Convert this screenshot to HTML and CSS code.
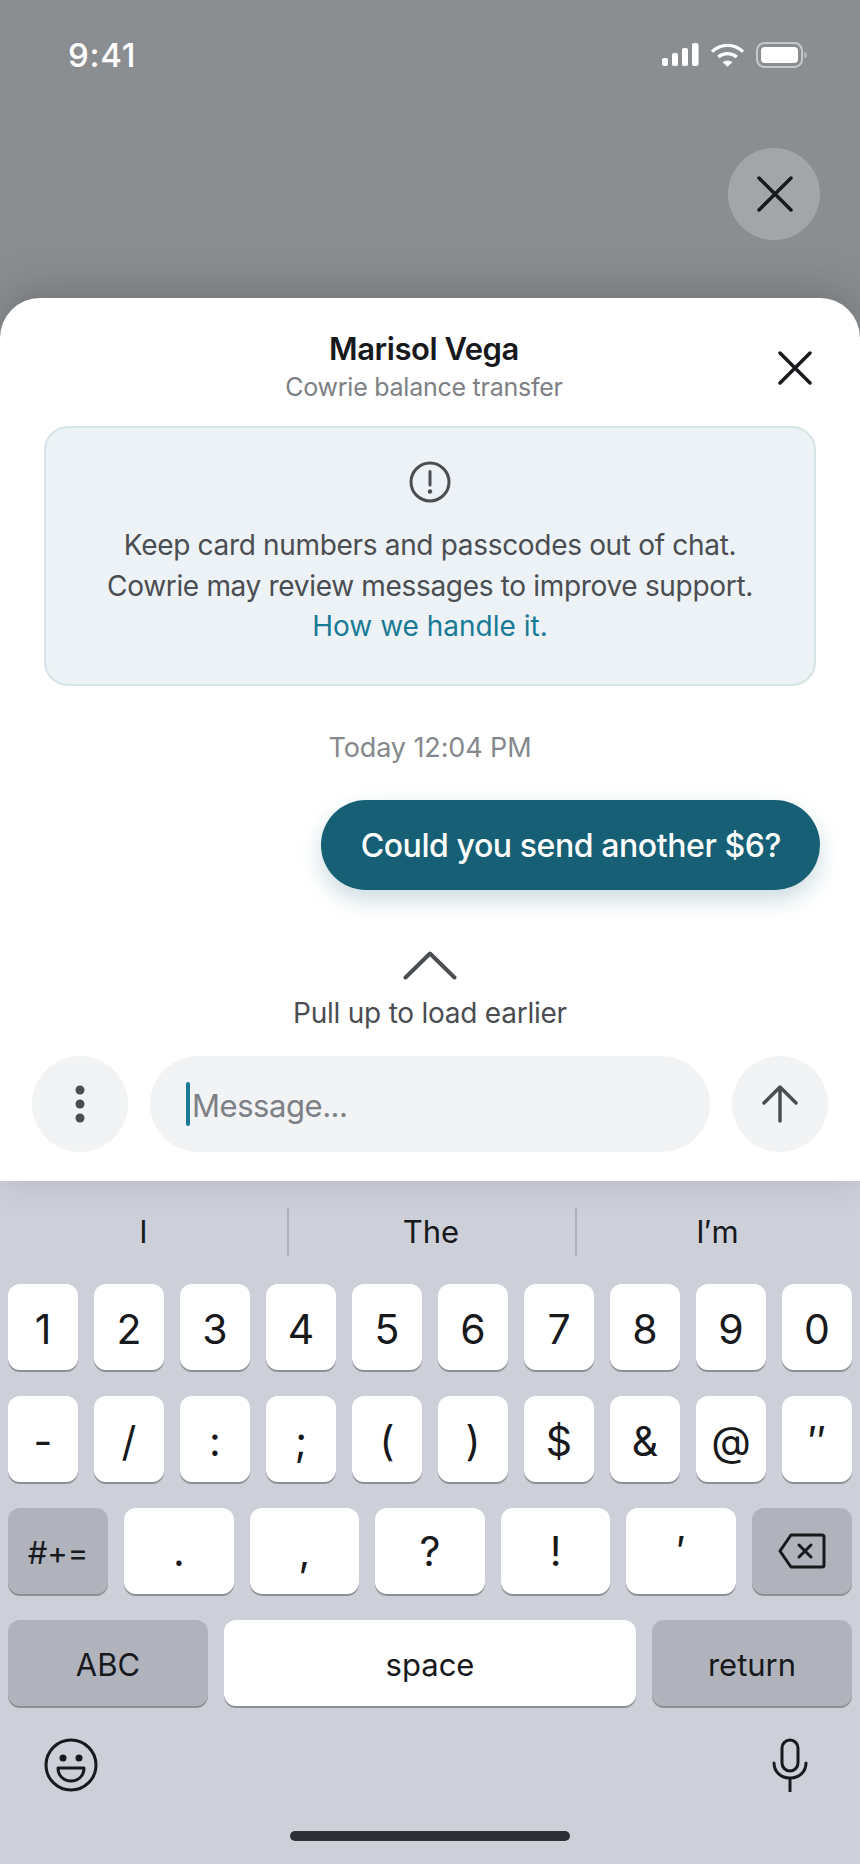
FILE: index.html
```html
<!DOCTYPE html>
<html lang="en">
<head>
    <meta charset="UTF-8">
    <meta name="viewport" content="width=device-width, initial-scale=1.0">
    <title>Marisol Vega - Chat</title>
    <link rel="stylesheet" href="styles.css">
</head>
<body>
    <div id="screen">
        <div class="backdrop">
            <div class="status-bar">
                <span class="time">9:41</span>
                <div class="status-icons">
                    <svg width="38" height="24" viewBox="0 0 38 24" fill="#fff">
                        <rect x="1" y="15" width="6" height="8" rx="2"/>
                        <rect x="11" y="10" width="6" height="13" rx="2"/>
                        <rect x="21" y="5" width="6" height="18" rx="2"/>
                        <rect x="31" y="0" width="6.500" height="23" rx="2"/>
                    </svg>
                    <svg width="35" height="24" viewBox="0 0 36 24" fill="none" stroke="#fff" stroke-width="3.4">
                        <path d="M2 8.500 C11 0 25 0 34 8.500"/>
                        <path d="M8.500 14 C14 9.500 22 9.500 27.500 14"/>
                        <path d="M13 19.500 L18 24 L23 19.500 C20 17.500 16 17.500 13 19.500 Z" fill="#fff" stroke="none"/>
                    </svg>
                    <svg width="52" height="26" viewBox="0 0 52 26" fill="none">
                        <rect x="1" y="1" width="45" height="24" rx="7.500" stroke="#c6c8ca" stroke-width="2"/>
                        <rect x="5" y="5" width="37" height="16" rx="4" fill="#fff"/>
                        <path d="M48 9.500 C50.500 10.500 51 11.500 51 13 C51 14.500 50.500 15.500 48 16.500 Z" fill="#b4b6b8"/>
                    </svg>
                </div>
            </div>
            <div class="dismiss-row">
                <button class="dismiss">
                    <svg width="36" height="36" viewBox="0 0 36 36" fill="none" stroke="#17191c" stroke-width="3.500" stroke-linecap="round">
                        <path d="M2 2 L34 34 M34 2 L2 34"/>
                    </svg>
                </button>
            </div>
        </div>

        <div class="sheet">
            <div class="sheet-head">
                <h1>Marisol Vega</h1>
                <p>Cowrie balance transfer</p>
                <svg class="sheet-close" width="34" height="34" viewBox="0 0 34 34" fill="none" stroke="#17191c" stroke-width="3.500" stroke-linecap="round">
                    <path d="M2 2 L32 32 M32 2 L2 32"/>
                </svg>
            </div>

            <div class="notice">
                <svg width="42" height="42" viewBox="0 0 42 42" fill="none" stroke="#4a4d52" stroke-width="3">
                    <circle cx="21" cy="21" r="19"/>
                    <path d="M21 10.500 V24" stroke-linecap="round"/>
                    <circle cx="21" cy="30.500" r="2.200" fill="#4a4d52" stroke="none"/>
                </svg>
                <p>Keep card numbers and passcodes out of chat.</p>
                <p>Cowrie may review messages to improve support.</p>
                <a href="#">How we handle it.</a>
            </div>

            <div class="stamp">Today 12:04 PM</div>

            <div class="thread">
                <div class="bubble">Could you send another $6?</div>
            </div>

            <div class="earlier">
                <svg width="54" height="29" viewBox="0 0 54 29" fill="none" stroke="#4a4d52" stroke-width="4" stroke-linecap="round" stroke-linejoin="round">
                    <path d="M2.500 26.500 L27 2.500 L51.500 26.500"/>
                </svg>
                <span>Pull up to load earlier</span>
            </div>

            <div class="composer">
                <button class="round-btn">
                    <svg width="10" height="38" viewBox="0 0 10 38" fill="#4a4d52">
                        <circle cx="5" cy="5" r="4.500"/>
                        <circle cx="5" cy="19" r="4.500"/>
                        <circle cx="5" cy="33" r="4.500"/>
                    </svg>
                </button>
                <div class="message-box"><span class="caret"></span><span>Message...</span></div>
                <button class="round-btn">
                    <svg width="36" height="38" viewBox="0 0 36 38" fill="none" stroke="#4a4d52" stroke-width="3.500" stroke-linecap="round" stroke-linejoin="round">
                        <path d="M18 36 V2 M2 18 L18 2 L34 18"/>
                    </svg>
                </button>
            </div>
        </div>

        <div class="keyboard">
            <div class="suggestions">
                <span>I</span>
                <span>The</span>
                <span>I′m</span>
            </div>
            <div class="key-row symbols">
                <div class="key">1</div><div class="key">2</div><div class="key">3</div><div class="key">4</div><div class="key">5</div>
                <div class="key">6</div><div class="key">7</div><div class="key">8</div><div class="key">9</div><div class="key">0</div>
            </div>
            <div class="key-row symbols">
                <div class="key">-</div><div class="key">/</div><div class="key">:</div><div class="key">;</div><div class="key">(</div>
                <div class="key">)</div><div class="key">$</div><div class="key">&amp;</div><div class="key">@</div><div class="key">″</div>
            </div>
            <div class="key-row">
                <div class="key dark side small">#+=</div>
                <div class="key">.</div><div class="key">,</div><div class="key">?</div><div class="key">!</div><div class="key">′</div>
                <div class="key dark side">
                    <svg width="48" height="36" viewBox="0 0 48 36" fill="none" stroke="#17191c" stroke-width="3" stroke-linejoin="round">
                        <path d="M13 2 H44 C45.500 2 46 2.500 46 4 V32 C46 33.500 45.500 34 44 34 H13 L2 18 Z"/>
                        <path d="M21 12 L33 24 M33 12 L21 24" stroke-linecap="round"/>
                    </svg>
                </div>
            </div>
            <div class="key-row">
                <div class="key dark wide small">ABC</div>
                <div class="key space small">space</div>
                <div class="key dark wide small">return</div>
            </div>
            <div class="kb-tools">
                <svg width="54" height="54" viewBox="0 0 54 54" fill="none" stroke="#17191c" stroke-width="3">
                    <circle cx="27" cy="27" r="25"/>
                    <circle cx="19" cy="20" r="3.500" fill="#17191c" stroke="none"/>
                    <circle cx="35" cy="20" r="3.500" fill="#17191c" stroke="none"/>
                    <path d="M14 30 H40 C40 38 34 43 27 43 C20 43 14 38 14 30 Z" stroke-linejoin="round"/>
                </svg>
                <svg width="36" height="54" viewBox="0 0 36 54" fill="none" stroke="#17191c" stroke-width="3" stroke-linecap="round">
                    <rect x="10" y="2" width="16" height="31" rx="8"/>
                    <path d="M2 25 C2 34 9 40 18 40 C27 40 34 34 34 25 M18 40 V53"/>
                </svg>
            </div>
            <div class="home-bar"></div>
        </div>
    </div>
</body>
</html>
```

FILE: styles.css
```css
* {
    box-sizing: border-box;
}

body {
    margin: 0;
    font-family: Inter, "Liberation Sans", sans-serif;
    background-color: #8b8e91;
}

h1, p {
    margin: 0;
}

#screen {
    width: 860px;
    height: 1864px;
    display: flex;
    flex-direction: column;
    overflow: hidden;
}

/* top area behind the sheet */
.backdrop {
    height: 298px;
    padding: 40px 40px 0 68px;
}

.status-bar {
    display: flex;
    justify-content: space-between;
    align-items: center;
    height: 30px;
}

.time {
    color: #fff;
    font-size: 33px;
    font-weight: 500;
    letter-spacing: 0.7px;
}

.status-icons {
    display: flex;
    align-items: center;
    gap: 11px;
    margin-right: 12px;
}

.dismiss-row {
    display: flex;
    justify-content: flex-end;
    margin-top: 78px;
}

.dismiss {
    width: 92px;
    height: 92px;
    border: none;
    border-radius: 50%;
    background-color: #a3a6a9;
    display: flex;
    align-items: center;
    justify-content: center;
    padding: 0 0 0 1px;
}

.sheet {
    height: 883px;
    background-color: #fff;
    border-radius: 40px 40px 0 0;
    box-shadow: 0 -10px 40px rgba(60, 62, 68, 0.3);
    position: relative;
}

.sheet-head {
    position: relative;
    height: 128px;
    padding: 32px 12px 0 0;
    text-align: center;
}

.sheet-head h1 {
    font-size: 31px;
    font-weight: 600;
    letter-spacing: -0.45px;
    line-height: 38px;
    color: #17191c;
}

.sheet-head p {
    margin-top: 1px;
    font-size: 25px;
    letter-spacing: -0.25px;
    line-height: 36px;
    color: #7d8084;
}

.sheet-close {
    position: absolute;
    top: 53px;
    right: 48px;
}

.notice {
    margin: 0 44px;
    height: 260px;
    background-color: #ecf2f5;
    border: 2px solid #d5e4e4;
    border-radius: 24px;
    display: flex;
    flex-direction: column;
    align-items: center;
    padding-top: 33px;
    font-size: 28px;
    letter-spacing: -0.32px;
    line-height: 40px;
    color: #4a4d52;
}

.notice svg {
    margin-bottom: 22px;
}

.notice p + p {
    margin-top: 1px;
}

.notice a {
    color: #1a7a95;
    letter-spacing: 0;
    text-decoration: none;
}

.stamp {
    margin-top: 44px;
    text-align: center;
    font-size: 27px;
    letter-spacing: -0.1px;
    line-height: 36px;
    color: #85888c;
}

.thread {
    display: flex;
    justify-content: flex-end;
    padding: 0 40px;
    margin-top: 34px;
}

.bubble {
    height: 90px;
    padding: 0 39px 0 40px;
    border-radius: 45px;
    background-color: #165f75;
    color: #fff;
    font-size: 32px;
    font-weight: 500;
    letter-spacing: -0.42px;
    line-height: 92px;
    box-shadow: 0 10px 22px rgba(22, 95, 117, 0.22);
}

.earlier {
    margin-top: 61px;
    display: flex;
    flex-direction: column;
    align-items: center;
    gap: 17px;
    font-size: 28px;
    letter-spacing: -0.24px;
    line-height: 32px;
    color: #4a4d52;
}

.composer {
    display: flex;
    align-items: center;
    gap: 22px;
    padding: 0 32px;
    margin-top: 27px;
}

.round-btn {
    width: 96px;
    height: 96px;
    flex-shrink: 0;
    border: none;
    border-radius: 50%;
    background-color: #f1f3f5;
    display: flex;
    align-items: center;
    justify-content: center;
    padding: 0;
}

.message-box {
    flex: 1;
    height: 96px;
    border-radius: 48px;
    background-color: #f1f3f5;
    display: flex;
    align-items: center;
    padding: 2px 0 0 36px;
    font-size: 31px;
    letter-spacing: -0.45px;
    color: #7d8084;
}

.caret {
    width: 4px;
    height: 44px;
    margin: -2px 2px 0 0;
    background-color: #1a7a95;
    border-radius: 2px;
}

.keyboard {
    flex: 1;
    background-color: #cdd0d9;
    padding: 0 8px;
}

.suggestions {
    display: grid;
    grid-template-columns: 287px 288px 285px;
    margin: 27px -8px 28px;
    height: 48px;
    font-size: 31px;
    line-height: 48px;
    text-align: center;
    color: #17191c;
}

.suggestions span + span {
    border-left: 2px solid #b0b3bb;
    padding-right: 2px;
}

.key-row {
    display: flex;
    gap: 16px;
    margin-bottom: 26px;
}

.key {
    flex: 1;
    height: 86px;
    border-radius: 12px;
    background-color: #fff;
    box-shadow: 0 2px 0 #8e9096;
    display: flex;
    align-items: center;
    justify-content: center;
    font-size: 41px;
    color: #17191c;
}

.symbols .key {
    padding-top: 3px;
}

.key.dark {
    background-color: #b0b3bc;
}

.key.small {
    padding-top: 2px;
    font-size: 31px;
}

.key.side {
    flex: 0 0 100px;
}

.key.wide {
    flex: 0 0 200px;
}

.key.space {
    flex: 1;
}

.kb-tools {
    display: flex;
    justify-content: space-between;
    padding: 6px 44px 0 36px;
}

.home-bar {
    width: 280px;
    height: 10px;
    margin: 39px auto 0;
    border-radius: 5px;
    background-color: #2e3035;
}
```
